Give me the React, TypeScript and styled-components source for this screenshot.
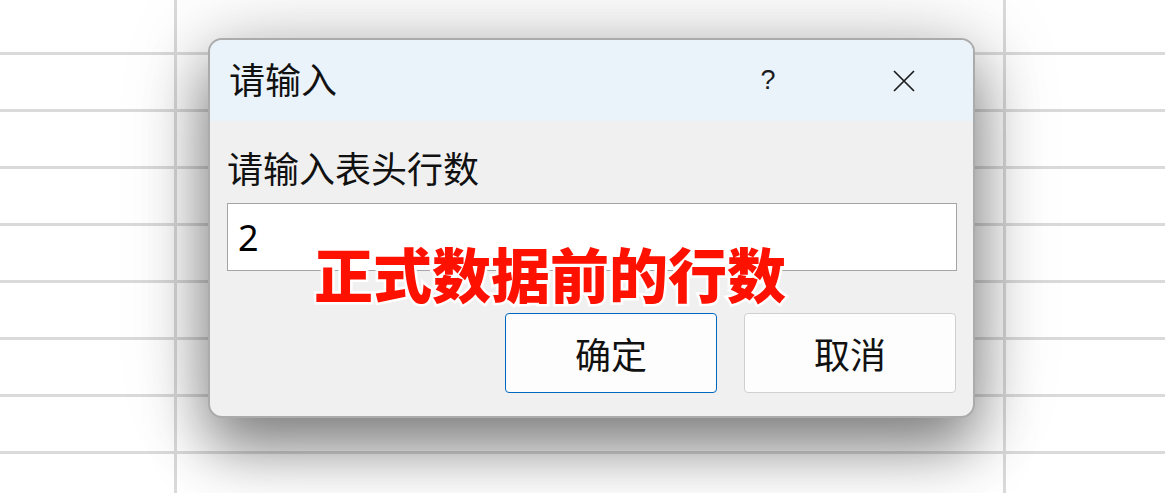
import React from 'react';
import styled, {createGlobalStyle} from "styled-components";

const GlobalStyle = createGlobalStyle`
    * {
        box-sizing: border-box;
    }
    html, body {
        margin: 0;
        padding: 0;
        background: #ffffff;
        font-family: "Noto Sans", "Noto Sans CJK SC", sans-serif;
        color: #1a1a1a;
    }
`

const ROWS = 9;
const COLS = 3;

export default function App() {
    return (
        <Page>
            <GlobalStyle/>
            <Sheet>
                {Array.from({length: ROWS * COLS}).map((_, i) => (
                    <Cell key={i}/>
                ))}
            </Sheet>

            <Dialog>
                <TitleBar>
                    <Title>请输入</Title>
                    <TitleButton aria-label="help">
                        <Help>?</Help>
                    </TitleButton>
                    <TitleButton aria-label="close" $last>
                        <svg width="22" height="22" viewBox="0 0 22 22">
                            <path d="M1 1 L21 21 M21 1 L1 21" stroke="#1c1c1c" strokeWidth="1.7" fill="none"/>
                        </svg>
                    </TitleButton>
                </TitleBar>
                <Body>
                    <Label>请输入表头行数</Label>
                    <Input defaultValue="2"/>
                    <Actions>
                        <Button $primary>确定</Button>
                        <Button>取消</Button>
                    </Actions>
                </Body>
            </Dialog>

            <Note>正式数据前的行数</Note>
        </Page>
    );
}

const Page = styled.div`
    position: relative;
    width: 1165px;
    height: 493px;
    overflow: hidden;
    background: #ffffff;
`
const Sheet = styled.div`
    display: grid;
    grid-template-columns: 174px 826px 1fr;
    grid-template-rows: 52px repeat(8, 54px);
    gap: 3px;
    background: #dadada;
    width: 100%;
`
const Cell = styled.div`
    background: #ffffff;
`
const Dialog = styled.section`
    position: absolute;
    left: 208px;
    top: 38px;
    width: 767px;
    height: 380px;
    display: flex;
    flex-direction: column;
    background: #f0f0f0;
    border: 2px solid #ababab;
    border-radius: 14px;
    overflow: hidden;
    box-shadow: 0 30px 60px rgba(0, 0, 0, 0.45), 0 0 90px rgba(0, 0, 0, 0.18);
    font-family: "Segoe UI", "Noto Sans", "Noto Sans CJK SC", sans-serif;
`
const TitleBar = styled.header`
    display: flex;
    align-items: center;
    height: 81px;
    padding-left: 19px;
    background: #ebf3fa;
`
const Title = styled.h1`
    flex: 1;
    margin: 0;
    font-size: 36px;
    font-weight: 400;
    line-height: 1;
    color: #111;
`
const TitleButton = styled.button<{ $last?: boolean }>`
    display: flex;
    align-items: center;
    justify-content: center;
    width: 60px;
    height: 60px;
    padding: 0;
    border: none;
    background: transparent;
    margin-right: ${({$last}) => ($last ? '39px' : '76px')};
`
const Help = styled.span`
    font-family: "Liberation Sans", sans-serif;
    font-size: 27px;
    line-height: 1;
    color: #1c1c1c;
`
const Body = styled.div`
    display: flex;
    flex-direction: column;
    padding: 28px 16px 0 17px;
`
const Label = styled.label`
    font-size: 36px;
    line-height: 42px;
    color: #111;
`
const Input = styled.input`
    margin-top: 12px;
    height: 68px;
    width: 100%;
    padding: 0 10px;
    border: 1px solid #a5a5a5;
    background: #ffffff;
    font-family: "Segoe UI", "Noto Sans", sans-serif;
    font-size: 36px;
    color: #000;
    outline: none;
`
const Actions = styled.div`
    display: flex;
    justify-content: flex-end;
    gap: 27px;
    margin-top: 42px;
    padding-right: 1px;
`
const Button = styled.button<{ $primary?: boolean }>`
    width: 212px;
    height: 80px;
    border-radius: 4px;
    background: #fdfdfd;
    border: 1px solid ${({$primary}) => ($primary ? '#0067c0' : '#d0d0d0')};
    font-family: "Noto Sans CJK SC", sans-serif;
    font-size: 36px;
    color: #111;
    padding: 0;
`
const Note = styled.div`
    position: absolute;
    left: 314px;
    top: 243px;
    font-family: "Noto Sans CJK SC", sans-serif;
    font-weight: 900;
    font-size: 59px;
    line-height: 1;
    letter-spacing: 0;
    color: #ff1100;
    -webkit-text-stroke: 5px #ffffff;
    paint-order: stroke fill;
    white-space: nowrap;
`
